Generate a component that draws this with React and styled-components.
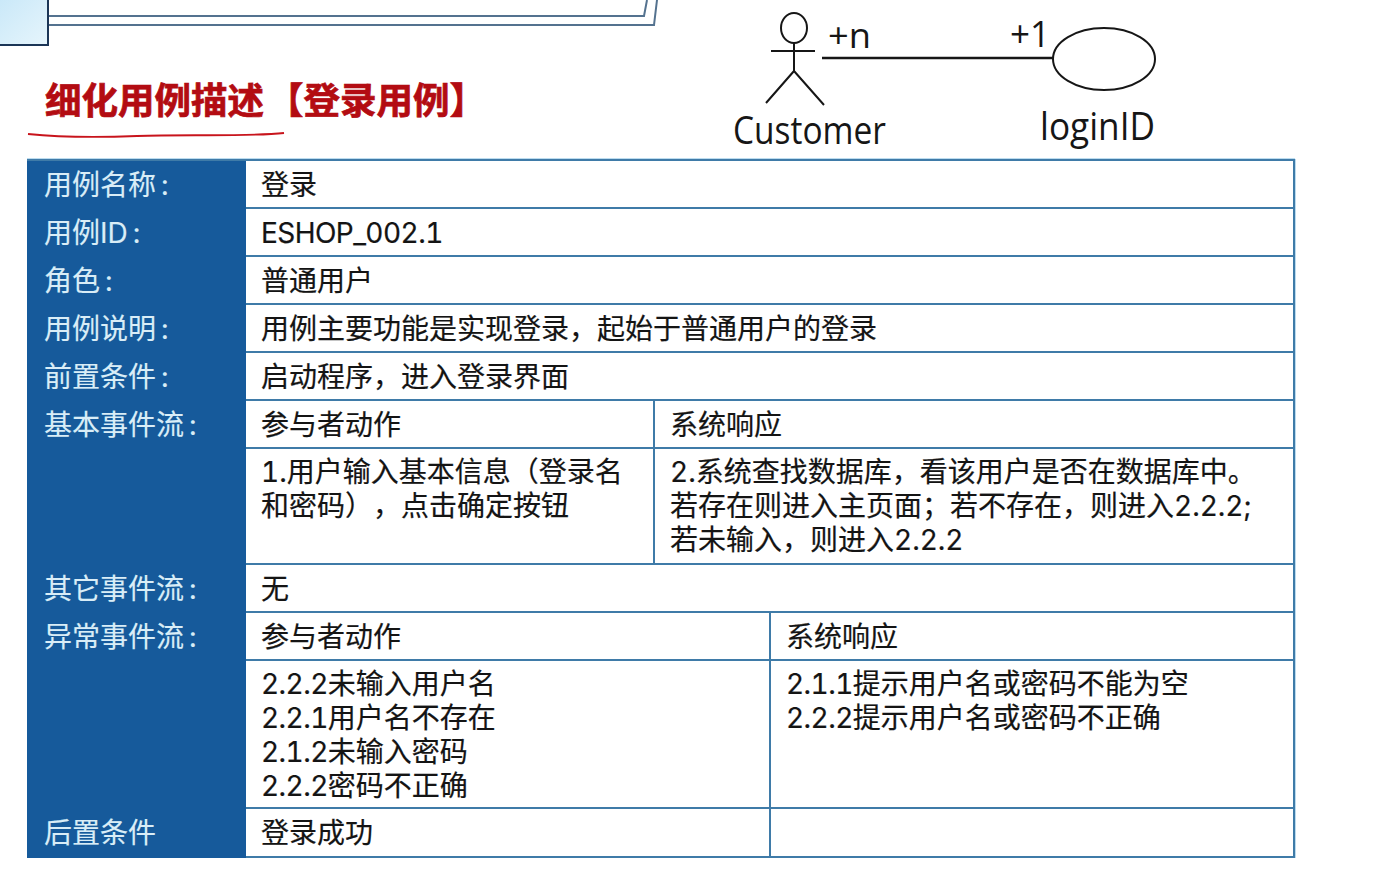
import React from 'react'
import styled, { createGlobalStyle } from 'styled-components'

const CJK = 'Inter, "Noto Sans CJK SC", "Noto Sans", sans-serif'
const LINE = '#3f7ba8'

const Global = createGlobalStyle`
  html, body {
    margin: 0;
    background: #fff;
    overflow: hidden;
  }
`

const Page = styled.div`
  width: 1396px;
  height: 874px;
  font-family: ${CJK};
  color: #141414;
  text-spacing-trim: space-all;
  font-variant-numeric: tabular-nums;
  font-kerning: none;
`

const Top = styled.div`
  display: flex;
  height: 159px;
`

const TitleSide = styled.div`
  width: 720px;
  display: flex;
  flex-direction: column;
`

const Title = styled.h1`
  margin: 31px 0 0 45px;
  font-size: 36.5px;
  line-height: 48px;
  font-weight: 700;
  color: #b30c12;
  -webkit-text-stroke: 0.7px #b30c12;
  white-space: nowrap;
`

const TitleTag = styled.span`
  margin-left: 3px;
`

const Scribble = styled.svg`
  display: block;
  margin: 6px 0 0 27px;
`

const Table = styled.div`
  width: 1268px;
  margin-left: 27px;
  display: flex;
  flex-direction: column;
  border-top: 2px solid ${LINE};
  border-right: 2px solid ${LINE};
  box-shadow: 0 -1px 0 #bcdcef, 1px 0 0 #bcdcef;
  box-sizing: border-box;
`

const Row = styled.div`
  display: flex;
`

const Label = styled.div`
  width: 219px;
  flex: none;
  box-sizing: border-box;
  padding-left: 17px;
  background: #165a9b;
  color: #d9edf7;
  font-size: 28px;
  line-height: 48px;
  -webkit-text-stroke: 0.15px #d9edf7;
`

const Colon = styled.span`
  margin-left: 5px;
`

const Body = styled.div`
  flex: 1;
  min-width: 0;
  display: flex;
  flex-direction: column;
`

const Line = styled.div`
  display: flex;
  height: ${props => props.h}px;
  box-sizing: border-box;
  border-bottom: 2.5px solid ${LINE};
`

const Cell = styled.div`
  flex: ${props => (props.w ? 'none' : 1)};
  width: ${props => (props.w ? props.w + 'px' : 'auto')};
  box-sizing: border-box;
  padding: ${props => props.pad || 0}px 0 0 15px;
  font-size: 28px;
  line-height: ${props => (props.pad ? '34px' : '48px')};
  white-space: pre-line;
  -webkit-text-stroke: 0.2px #141414;
  border-right: ${props => (props.w ? `2px solid ${LINE}` : 'none')};
`

const Num = styled.span`
  letter-spacing: -0.55px;
`

function FrameArt() {
  return (
    <svg width="720" height="46" viewBox="0 0 720 46" style={{ display: 'block' }}>
      <defs>
        <linearGradient id="tab" x1="0" y1="0" x2="1" y2="1">
          <stop offset="0" stopColor="#c9e8f8" />
          <stop offset="1" stopColor="#e6f5fc" />
        </linearGradient>
      </defs>
      <polyline points="49,16 644,16 647,0" fill="none" stroke="#54728f" strokeWidth="2" />
      <polyline points="49,25 654,25 657,0" fill="none" stroke="#54728f" strokeWidth="2" />
      <rect x="-2" y="-2" width="50" height="47" fill="url(#tab)" stroke="#1b3556" strokeWidth="2" />
    </svg>
  )
}

function UseCaseDiagram() {
  const text = { fontFamily: '"Open Sans", sans-serif', fill: '#161616' }
  return (
    <svg width="480" height="159" viewBox="720 0 480 159" style={{ display: 'block' }}>
      <g fill="none" stroke="#161616" strokeWidth="2">
        <ellipse cx="794" cy="28" rx="13" ry="15" />
        <path d="M771 51H815M794 43V71L766 103M794 71L824 105" />
        <ellipse cx="1104" cy="59" rx="51" ry="31" />
      </g>
      <path d="M822 58H1053" stroke="#161616" strokeWidth="2.6" />
      <text x="828" y="48" fontSize="35" textLength="43" lengthAdjust="spacingAndGlyphs" {...text}>+n</text>
      <text x="1010" y="47" fontSize="36" textLength="40" lengthAdjust="spacingAndGlyphs" {...text}>+1</text>
      <text x="733" y="144" fontSize="38" textLength="153" lengthAdjust="spacingAndGlyphs" {...text}>Customer</text>
      <text x="1040" y="140" fontSize="38" textLength="115" lengthAdjust="spacingAndGlyphs" {...text}>loginID</text>
    </svg>
  )
}

const simpleRows = [
  ['用例名称', '登录'],
  ['用例ID', <Num>ESHOP_002.1</Num>],
  ['角色', '普通用户'],
  ['用例说明', '用例主要功能是实现登录，起始于普通用户的登录'],
  ['前置条件', '启动程序，进入登录界面'],
]

export default function App() {
  return (
    <Page>
      <Global />
      <Top>
        <TitleSide>
          <FrameArt />
          <Title>细化用例描述<TitleTag>【登录用例】</TitleTag></Title>
          <Scribble width="260" height="10" viewBox="0 0 260 10">
            <path d="M1 3C30 6 60 7 110 5S220 6 257 2" fill="none" stroke="#c8141c" strokeWidth="1.8" />
          </Scribble>
        </TitleSide>
        <UseCaseDiagram />
      </Top>
      <Table>
        {simpleRows.map(([label, value]) => (
          <Row key={label}>
            <Label>{label}<Colon>:</Colon></Label>
            <Body>
              <Line h={48}><Cell>{value}</Cell></Line>
            </Body>
          </Row>
        ))}
        <Row>
          <Label>基本事件流<Colon>:</Colon></Label>
          <Body>
            <Line h={48}>
              <Cell w={409}>参与者动作</Cell>
              <Cell>系统响应</Cell>
            </Line>
            <Line h={116}>
              <Cell w={409} pad={6}>{'1.用户输入基本信息（登录名\n和密码），点击确定按钮'}</Cell>
              <Cell pad={6}>{'2.系统查找数据库，看该用户是否在数据库中。\n若存在则进入主页面；若不存在，则进入2.2.2;\n若未输入，则进入2.2.2'}</Cell>
            </Line>
          </Body>
        </Row>
        <Row>
          <Label>其它事件流<Colon>:</Colon></Label>
          <Body>
            <Line h={48}><Cell>无</Cell></Line>
          </Body>
        </Row>
        <Row>
          <Label>异常事件流<Colon>:</Colon></Label>
          <Body>
            <Line h={48}>
              <Cell w={525}>参与者动作</Cell>
              <Cell>系统响应</Cell>
            </Line>
            <Line h={148}>
              <Cell w={525} pad={6}>
                <Num>2.2.2</Num>未输入用户名{'\n'}
                <Num>2.2.1</Num>用户名不存在{'\n'}
                <Num>2.1.2</Num>未输入密码{'\n'}
                <Num>2.2.2</Num>密码不正确
              </Cell>
              <Cell pad={6}>
                <Num>2.1.1</Num>提示用户名或密码不能为空{'\n'}
                <Num>2.2.2</Num>提示用户名或密码不正确
              </Cell>
            </Line>
          </Body>
        </Row>
        <Row>
          <Label>后置条件</Label>
          <Body>
            <Line h={49}>
              <Cell w={525}>登录成功</Cell>
              <Cell />
            </Line>
          </Body>
        </Row>
      </Table>
    </Page>
  )
}
